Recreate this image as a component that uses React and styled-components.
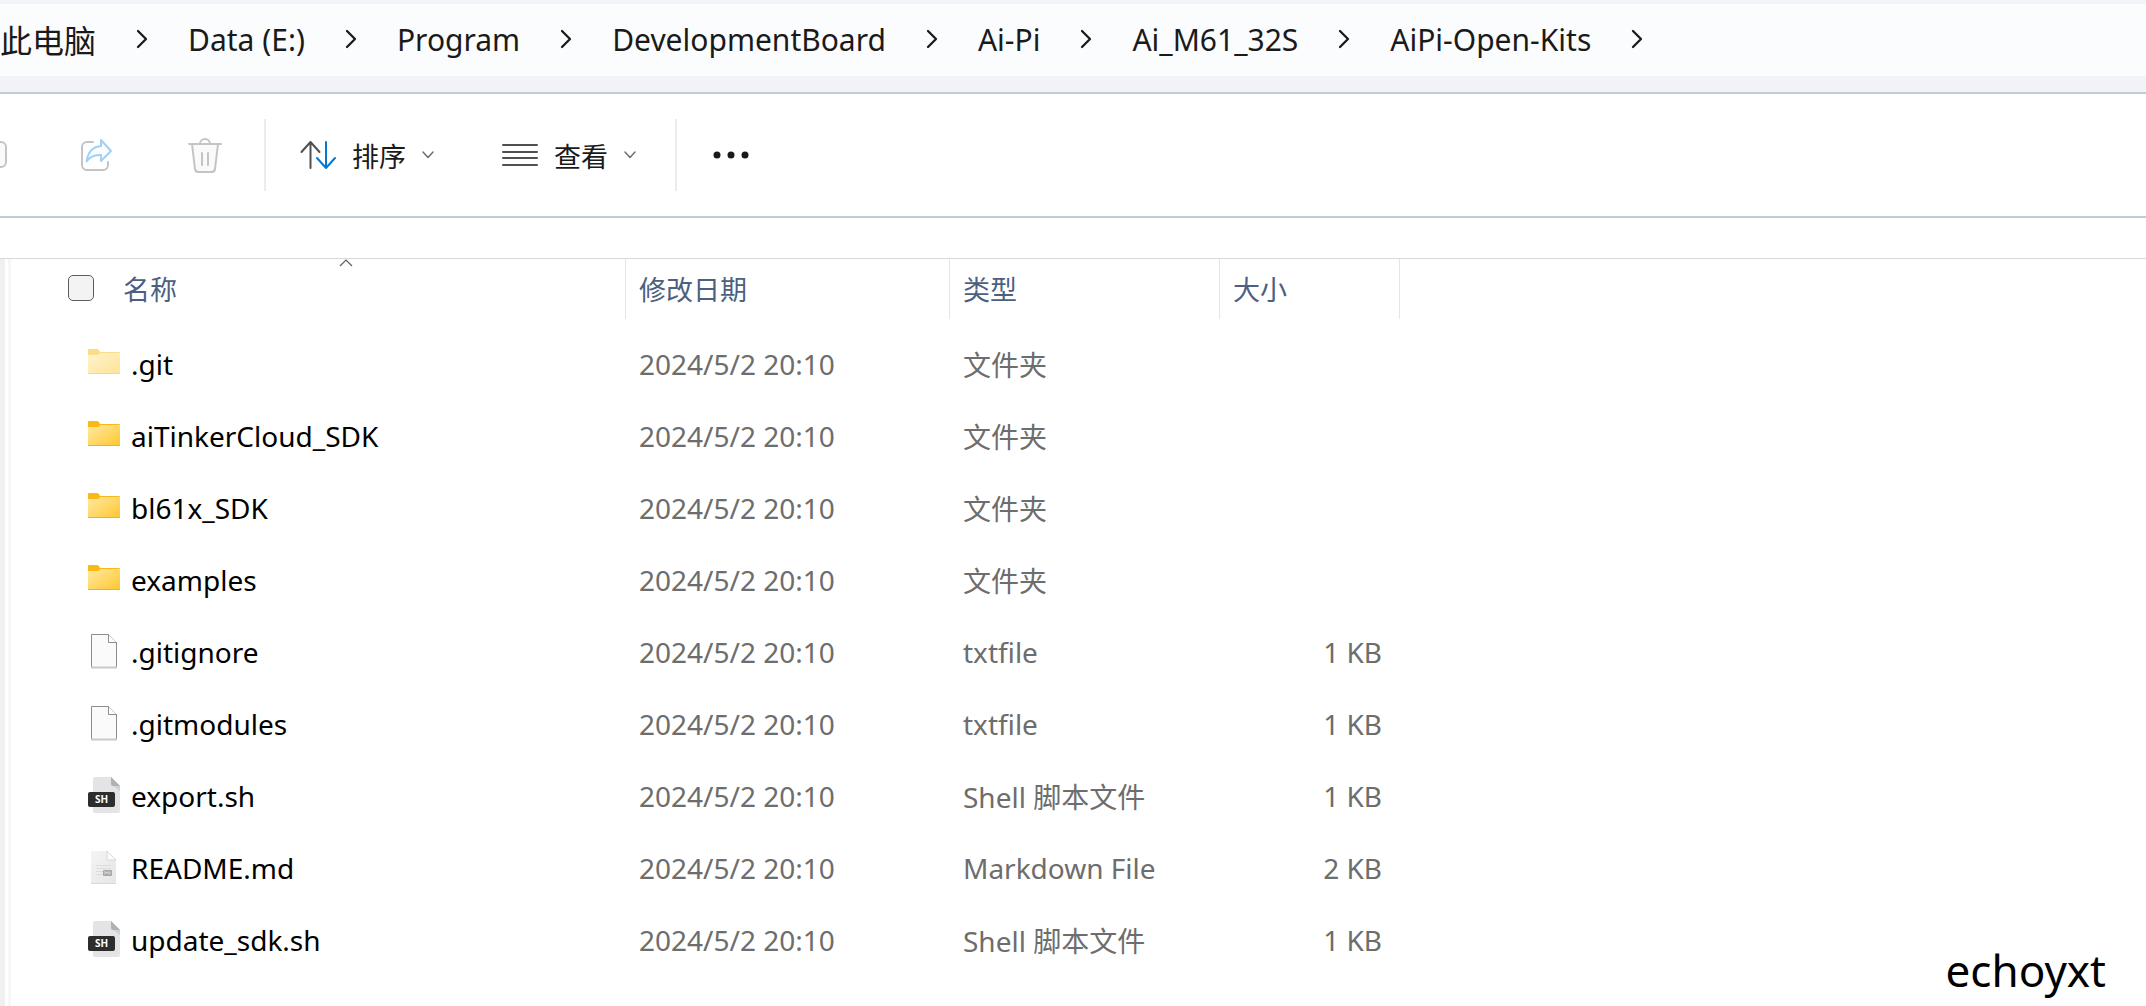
import React, { useState } from 'react';
import styled, { createGlobalStyle, css } from 'styled-components';

const GlobalStyle = createGlobalStyle`
  * {
    box-sizing: border-box;
  }

  body {
    margin: 0;
    background: #fff;
    color: #1a1a1a;
    font-family: "Noto Sans", "Noto Sans CJK SC", sans-serif;
  }
`

const plainButton = css`
  margin: 0;
  padding: 0;
  border: 0;
  background: none;
  color: inherit;
  font: inherit;
  cursor: pointer;
`

const Window = styled.div`
  position: relative;
  display: flex;
  flex-direction: column;
  min-height: 100vh;
  overflow: hidden;
`

const AddressBar = styled.header`
  padding: 4px 0 16px;
  background: #f1f3f8;
  border-bottom: 2px solid #c2cbd9;
`

const Breadcrumbs = styled.nav`
  display: flex;
  align-items: center;
  height: 72px;
  padding-bottom: 2px;
  background: #fbfcfe;
  font-size: 30px;
  white-space: nowrap;
`

const Crumb = styled.a`
  color: inherit;
  text-decoration: none;
  font-size: ${(props) => (props.$cjk ? '32px' : 'inherit')};
`

const CrumbArrow = styled.button`
  ${plainButton}
  display: flex;
  align-items: center;
  justify-content: center;
  width: 92px;
  height: 48px;
`

const Toolbar = styled.div`
  display: flex;
  align-items: center;
  height: 124px;
  border-bottom: 2px solid #c2cbd9;
`

const ToolGroup = styled.div`
  display: flex;
  align-items: center;
  padding-right: 5px;
`

const ToolButton = styled.button`
  ${plainButton}
  display: flex;
  align-items: center;
  height: 72px;
  padding: 0 36px;

  &:disabled {
    cursor: default;
  }
`

const MenuButton = styled(ToolButton)`
  gap: 16px;
  padding: 0 34px;
  font-size: 27px;
  white-space: nowrap;
`

const CutOffButton = styled(ToolButton)`
  padding-left: 0;
`

const Divider = styled.span`
  width: 2px;
  height: 72px;
  background: #ececec;
`

const Content = styled.main`
  display: flex;
  flex: 1;
  margin-top: 40px;
  border-top: 1px solid #d9d9d9;
`

const PaneEdge = styled.div`
  width: 11px;
  border-left: 5px solid #f0f0f0;
  border-right: 3px solid #f7f7f7;
`

const FileTable = styled.table`
  align-self: flex-start;
  table-layout: fixed;
  width: 1389px;
  border-collapse: separate;
  border-spacing: 0;
  font-size: 28px;
  white-space: nowrap;

  tbody::before {
    content: '';
    display: block;
    height: 9px;
  }
`

const HeadCell = styled.th`
  position: relative;
  width: ${(props) => props.$width};
  height: 60px;
  padding: 0 13px 2px;
  border-right: 1px solid #e5e5e5;
  color: #4c607f;
  font-size: 27px;
  font-weight: 400;
  text-align: left;
`

const NameHead = styled.div`
  display: flex;
  align-items: center;
  gap: 29px;
  padding-left: 44px;
`

const SortCaret = styled.svg`
  position: absolute;
  top: 0;
  left: calc(50% + 21px);
`

const CheckBox = styled.input`
  appearance: none;
  width: 26px;
  height: 26px;
  margin: 0;
  border: 1px solid #5c5c5c;
  border-radius: 5px;
  background: #f3f3f3;

  &:checked {
    background: #0078d4;
  }
`

const Cell = styled.td`
  height: 72px;
  padding: 0 13px;
  color: #6d6d6d;
  text-align: ${(props) => (props.$right ? 'right' : 'left')};
`

const SizeCell = styled(Cell)`
  padding-right: 18px;
`

const NameCell = styled(Cell)`
  padding-left: 77px;
  color: #000;
`

const FileName = styled.div`
  display: flex;
  align-items: center;
  gap: 11px;
`

const Watermark = styled.div`
  position: absolute;
  right: 40px;
  bottom: 6px;
  color: #000;
  font-size: 44px;
  line-height: 60px;
`

const crumbs = [
  { label: '此电脑', cjk: true },
  { label: 'Data (E:)' },
  { label: 'Program' },
  { label: 'DevelopmentBoard' },
  { label: 'Ai-Pi' },
  { label: 'Ai_M61_32S' },
  { label: 'AiPi-Open-Kits' },
];

const files = [
  { name: '.git', icon: 'hiddenFolder', type: '文件夹', size: '' },
  { name: 'aiTinkerCloud_SDK', icon: 'folder', type: '文件夹', size: '' },
  { name: 'bl61x_SDK', icon: 'folder', type: '文件夹', size: '' },
  { name: 'examples', icon: 'folder', type: '文件夹', size: '' },
  { name: '.gitignore', icon: 'text', type: 'txtfile', size: '1 KB' },
  { name: '.gitmodules', icon: 'text', type: 'txtfile', size: '1 KB' },
  { name: 'export.sh', icon: 'shell', type: 'Shell 脚本文件', size: '1 KB' },
  { name: 'README.md', icon: 'markdown', type: 'Markdown File', size: '2 KB' },
  { name: 'update_sdk.sh', icon: 'shell', type: 'Shell 脚本文件', size: '1 KB' },
];

const modified = '2024/5/2 20:10';

const ArrowRight = () => (
  <svg width="12" height="20" viewBox="0 0 12 20" fill="none" stroke="#1a1a1a" strokeWidth="2.3" strokeLinecap="round" strokeLinejoin="round">
    <path d="M2 2l8 8-8 8" />
  </svg>
);

const ArrowDown = () => (
  <svg width="12" height="8" viewBox="0 0 12 8" fill="none" stroke="#6a6a6a" strokeWidth="1.4" strokeLinecap="round" strokeLinejoin="round">
    <path d="M1 1l5 5.5 5-5.5" />
  </svg>
);

const CutOffIcon = () => (
  <svg width="7" height="36" viewBox="0 0 7 36" fill="#fafafa" stroke="#c4c4c4" strokeWidth="2">
    <path d="M-2 5H1a5 5 0 0 1 5 5v15a5 5 0 0 1-5 5h-3" />
  </svg>
);

const ShareIcon = () => (
  <svg width="36" height="36" viewBox="0 0 36 36" fill="none" strokeWidth="2" strokeLinecap="round" strokeLinejoin="round">
    <path d="M9 5H8a5 5 0 0 0-5 5v18a5 5 0 0 0 5 5h-1M9 5h-1M9 5h0M9 5H14M8 33h16a5 5 0 0 0 5-5v-3" fill="none" stroke="#c4c4c4" />
    <path d="M22 3l10 11-10 10v-6c-7-.5-11 1.500-14.500 6.500C9 15 14 9.500 22 9z" stroke="#a3d0f3" fill="#fafcfe" />
  </svg>
);

const TrashIcon = () => (
  <svg width="36" height="38" viewBox="0 0 36 38" fill="none" stroke="#c4c4c4" strokeWidth="2" strokeLinecap="round" strokeLinejoin="round">
    <path d="M5 8l3 25a3.500 3.500 0 0 0 3.500 3h13a3.500 3.500 0 0 0 3.500-3L31 8" fill="#fafafa" />
    <path d="M2 8h32M13 8a5 5 0 0 1 10 0M15 17v12M21 17v12" />
  </svg>
);

const SortIcon = () => (
  <svg width="36" height="30" viewBox="0 0 36 30" fill="none" strokeWidth="2" strokeLinecap="round" strokeLinejoin="round">
    <path d="M10.500 28V2M1.500 12l9-10 9 10" stroke="#505050" />
    <path d="M26 2v26M17 18l9 10 9-10" stroke="#0078d4" />
  </svg>
);

const ViewIcon = () => (
  <svg width="36" height="24" viewBox="0 0 36 24" stroke="#505050" strokeWidth="2" strokeLinecap="round">
    <path d="M1 2h34M1 9h34M1 15h34M1 22h34" />
  </svg>
);

const MoreIcon = () => (
  <svg width="36" height="8" viewBox="0 0 36 8" fill="#1a1a1a">
    <circle cx="4" cy="4" r="3.5" />
    <circle cx="18" cy="4" r="3.5" />
    <circle cx="32" cy="4" r="3.5" />
  </svg>
);

const FolderIcon = ({ hidden }) => (
  <svg width="32" height="40" viewBox="0 -1 32 40" opacity={hidden ? 0.5 : 1}>
    <defs>
      <linearGradient id="folderFront" x1="0" y1="0" x2="1" y2="1">
        <stop offset="0" stopColor="#ffe9a2" />
        <stop offset="1" stopColor="#ffc730" />
      </linearGradient>
    </defs>
    <path d="M0 5q0-1 1-1h8q2 0 3 3h19q1 0 1 1v6H0z" fill="#fbb917" />
    <path d="M0 10h10q1 0 2-2h20v20q0 1-1 1H1q-1 0-1-1z" fill="url(#folderFront)" />
    <path d="M0 28q0 1 1 1h30q1 0 1-1z" fill="#efae2b" />
  </svg>
);

const TextIcon = () => (
  <svg width="32" height="40" viewBox="0 -1 32 40" fill="#fafafa" stroke="#8c8c8c">
    <path d="M3.500 1.500h17l8 8v25h-25z" />
    <path d="M20.500 1.500v8h8" fill="#fff" />
    <path d="M3 34.500h26" stroke="#c8c8c8" strokeWidth="2" />
  </svg>
);

const ShellIcon = () => (
  <svg width="32" height="40" viewBox="0 -1 32 40">
    <path d="M7 0h16l9 9v25q0 2-2 2H7q-2 0-2-2V2q0-2 2-2z" fill="#e2e4e6" />
    <path d="M23 0l9 9v5l-9-7z" fill="#cdd1d5" />
    <path d="M23 0l9 9h-7q-2 0-2-2z" fill="#adb2b7" />
    <rect y="15" width="27" height="15" rx="2" fill="#2d2d2d" />
    <text x="13.500" y="26" textAnchor="middle" fontSize="10" fontWeight="700" fill="#fff">SH</text>
  </svg>
);

const MarkdownIcon = () => (
  <svg width="32" height="40" viewBox="0 -1 32 40">
    <defs>
      <linearGradient id="mdPage" x1="0" y1="0" x2="1" y2="1">
        <stop offset="0" stopColor="#f4f4f4" />
        <stop offset="1" stopColor="#e6e6e6" />
      </linearGradient>
    </defs>
    <path d="M4 2h15l9 9v23q0 1-1 1H4q-1 0-1-1V3q0-1 1-1z" fill="url(#mdPage)" />
    <path d="M19 2l9 9h-8q-1 0-1-1z" fill="#fcfcfc" stroke="#cfcfcf" strokeWidth=".8" />
    <path d="M8 16.500h15M8 19.500h15M8 22.500h7M8 25.500h7" stroke="#dcdcdc" />
    <path d="M3 34.500h25" stroke="#d8d8d8" />
    <rect x="15" y="21" width="9" height="6" rx="1" fill="#a6a6a6" />
    <path d="M17 25.500v-3l1.500 1.500 1.500-1.500v3M22 22.500v3" fill="none" stroke="#ededed" strokeWidth=".8" />
  </svg>
);

const FileIcon = ({ kind }) => {
  if (kind === 'shell') return <ShellIcon />;
  if (kind === 'markdown') return <MarkdownIcon />;
  if (kind === 'text') return <TextIcon />;
  return <FolderIcon hidden={kind === 'hiddenFolder'} />;
};

const App = () => {
  const [allSelected, setAllSelected] = useState(false);

  return (
    <>
      <GlobalStyle />
      <Window>
        <AddressBar>
          <Breadcrumbs>
            {crumbs.map((crumb) => (
              <React.Fragment key={crumb.label}>
                <Crumb href="#" $cjk={crumb.cjk}>{crumb.label}</Crumb>
                <CrumbArrow type="button" aria-label={crumb.label}><ArrowRight /></CrumbArrow>
              </React.Fragment>
            ))}
          </Breadcrumbs>
        </AddressBar>

        <Toolbar>
          <ToolGroup>
            <CutOffButton type="button" aria-label="重命名" disabled><CutOffIcon /></CutOffButton>
            <ToolButton type="button" aria-label="共享" disabled><ShareIcon /></ToolButton>
            <ToolButton type="button" aria-label="删除" disabled><TrashIcon /></ToolButton>
          </ToolGroup>
          <Divider />
          <ToolGroup>
            <MenuButton type="button"><SortIcon />排序<ArrowDown /></MenuButton>
            <MenuButton type="button"><ViewIcon />查看<ArrowDown /></MenuButton>
          </ToolGroup>
          <Divider />
          <ToolButton type="button" aria-label="更多"><MoreIcon /></ToolButton>
        </Toolbar>

        <Content>
          <PaneEdge />
          <FileTable>
            <thead>
              <tr>
                <HeadCell $width="615px">
                  <NameHead>
                    <CheckBox
                      type="checkbox"
                      aria-label="全选"
                      checked={allSelected}
                      onChange={(event) => setAllSelected(event.target.checked)}
                    />
                    名称
                  </NameHead>
                  <SortCaret width="14" height="9" viewBox="0 0 14 9" fill="none" stroke="#5c5c5c" strokeWidth="1.2">
                    <path d="M1 7l6-6 6 6" />
                  </SortCaret>
                </HeadCell>
                <HeadCell $width="324px">修改日期</HeadCell>
                <HeadCell $width="270px">类型</HeadCell>
                <HeadCell $width="180px">大小</HeadCell>
              </tr>
            </thead>
            <tbody>
              {files.map((file) => (
                <tr key={file.name}>
                  <NameCell>
                    <FileName><FileIcon kind={file.icon} />{file.name}</FileName>
                  </NameCell>
                  <Cell>{modified}</Cell>
                  <Cell>{file.type}</Cell>
                  <SizeCell $right>{file.size}</SizeCell>
                </tr>
              ))}
            </tbody>
          </FileTable>
        </Content>

        <Watermark>echoyxt</Watermark>
      </Window>
    </>
  );
};

export default App;
